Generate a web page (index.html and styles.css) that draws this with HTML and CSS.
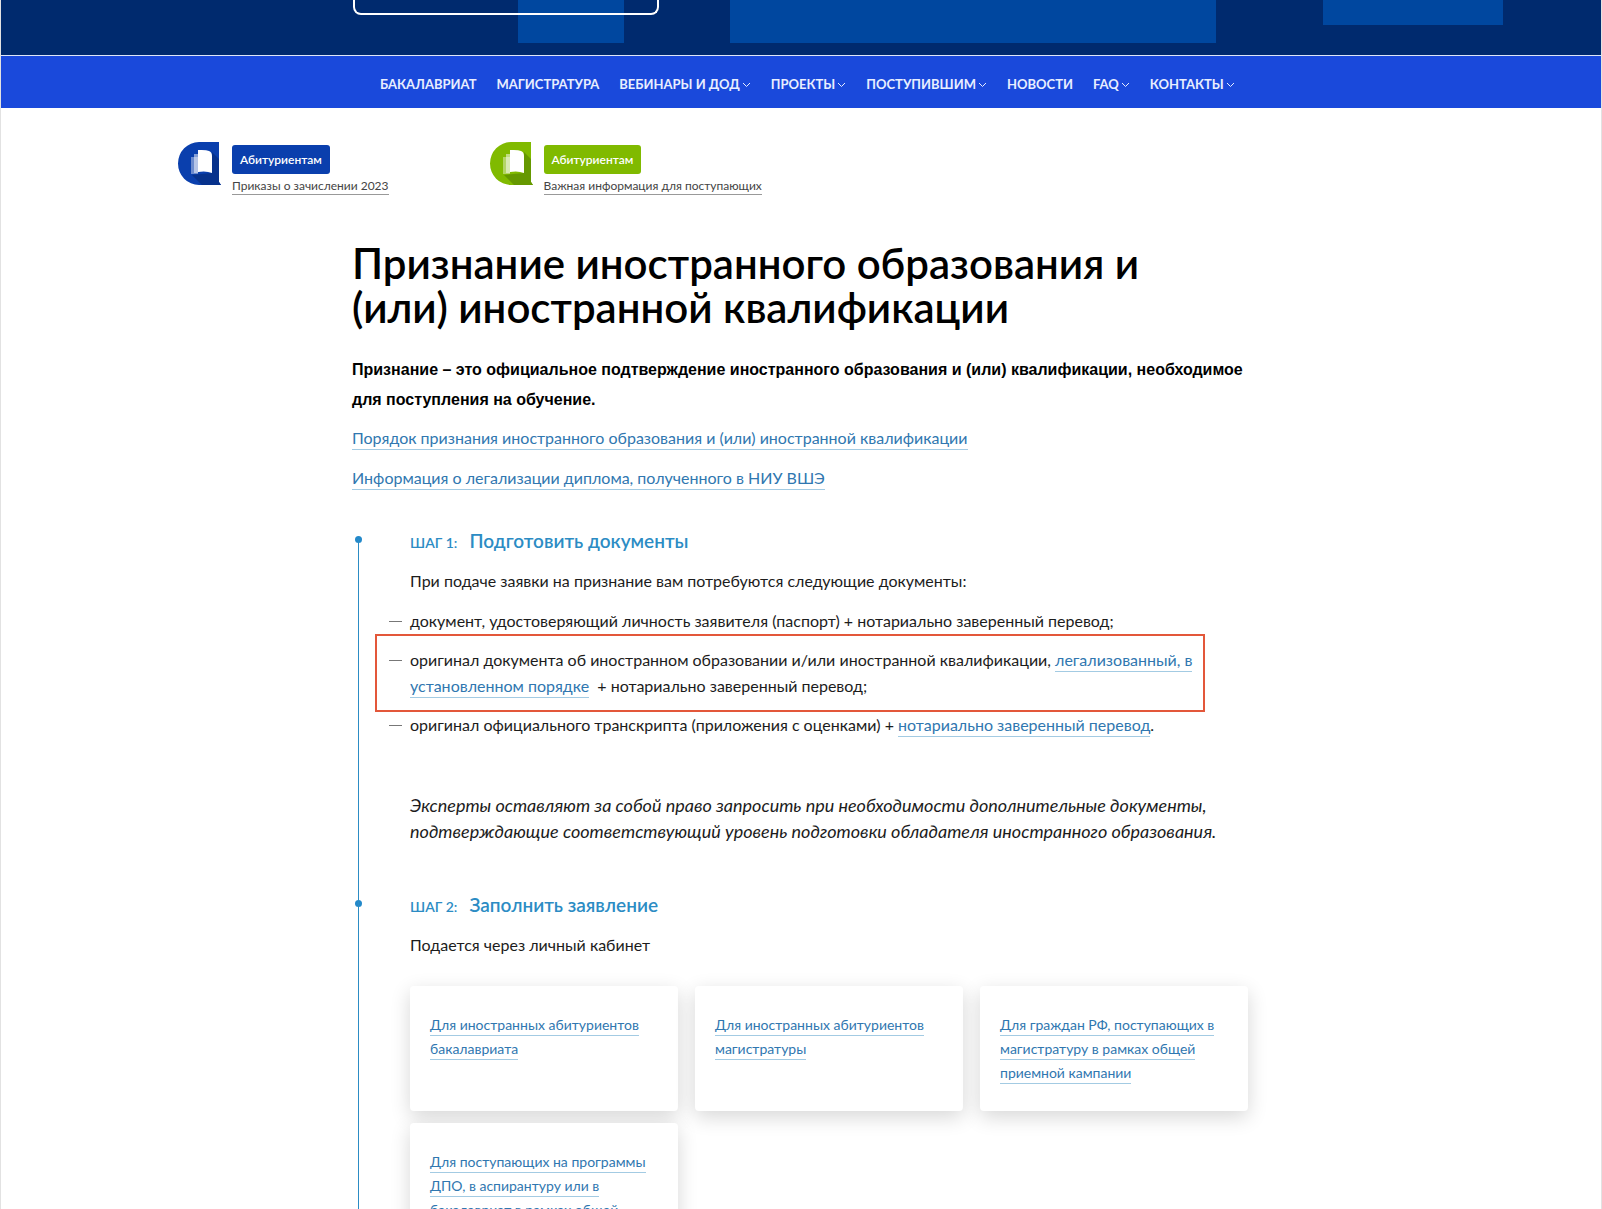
FILE: index.html
```html
<!DOCTYPE html>
<html lang="ru">
<head>
<meta charset="utf-8">
<meta name="viewport" content="width=device-width, initial-scale=1">
<title>Признание иностранного образования</title>
<link rel="stylesheet" href="styles.css">
</head>
<body>
<div class="page">
  <header class="hero">
    <div class="hero-block hero-block-a"></div>
    <div class="hero-block hero-block-b"></div>
    <div class="hero-block hero-block-c"></div>
    <div class="hero-frame"></div>
  </header>

  <nav class="nav" aria-label="Основное меню">
    <ul class="nav-list">
      <li><a href="#">БАКАЛАВРИАТ</a></li>
      <li><a href="#">МАГИСТРАТУРА</a></li>
      <li><a href="#">ВЕБИНАРЫ И ДОД<svg class="chevron" viewBox="0 0 9 6"><path d="M1 1l3.500 3.500L8 1"/></svg></a></li>
      <li><a href="#">ПРОЕКТЫ<svg class="chevron" viewBox="0 0 9 6"><path d="M1 1l3.500 3.500L8 1"/></svg></a></li>
      <li><a href="#">ПОСТУПИВШИМ<svg class="chevron" viewBox="0 0 9 6"><path d="M1 1l3.500 3.500L8 1"/></svg></a></li>
      <li><a href="#">НОВОСТИ</a></li>
      <li><a href="#">FAQ<svg class="chevron" viewBox="0 0 9 6"><path d="M1 1l3.500 3.500L8 1"/></svg></a></li>
      <li><a href="#">КОНТАКТЫ<svg class="chevron" viewBox="0 0 9 6"><path d="M1 1l3.500 3.500L8 1"/></svg></a></li>
    </ul>
  </nav>

  <section class="notices">
    <article class="notice notice-blue">
      <svg class="notice-icon" viewBox="0 0 43 43">
        <path class="icon-base" d="M21 0H41V40L43 43H21A21 21.500 0 0 1 21 0Z"/>
        <path class="icon-shade" d="M14 33L24 43H43L41 40V17L34 10V31Z"/>
        <path class="icon-page-back" d="M13 15h7v17h-7z"/>
        <path class="icon-page-mid" d="M16 12h4v19h-4z"/>
        <path class="icon-page" d="M20 8Q28 7.500 31 9Q34 10 34 14V31Q28 28.500 20 30Z"/>
      </svg>
      <div class="notice-body">
        <a class="badge" href="#">Абитуриентам</a>
        <a class="notice-link" href="#">Приказы о зачислении 2023</a>
      </div>
    </article>
    <article class="notice notice-green">
      <svg class="notice-icon" viewBox="0 0 43 43">
        <path class="icon-base" d="M21 0H41V40L43 43H21A21 21.500 0 0 1 21 0Z"/>
        <path class="icon-shade" d="M14 33L24 43H43L41 40V17L34 10V31Z"/>
        <path class="icon-page-back" d="M13 15h7v17h-7z"/>
        <path class="icon-page-mid" d="M16 12h4v19h-4z"/>
        <path class="icon-page" d="M20 8Q28 7.500 31 9Q34 10 34 14V31Q28 28.500 20 30Z"/>
      </svg>
      <div class="notice-body">
        <a class="badge" href="#">Абитуриентам</a>
        <a class="notice-link" href="#">Важная информация для поступающих</a>
      </div>
    </article>
  </section>

  <main class="content">
    <h1 class="title">Признание иностранного образования и (или) иностранной квалификации</h1>
    <p class="lead">Признание – это официальное подтверждение иностранного образования и (или) квалификации, необходимое для поступления на обучение.</p>
    <p class="text"><a class="link" href="#">Порядок признания иностранного образования и (или) иностранной квалификации</a></p>
    <p class="text"><a class="link" href="#">Информация о легализации диплома, полученного в НИУ ВШЭ</a></p>

    <div class="steps">
      <section class="step">
        <h2 class="step-title"><span class="step-number">ШАГ 1:</span>Подготовить документы</h2>
        <p class="text">При подаче заявки на признание вам потребуются следующие документы:</p>
        <ul class="docs">
          <li>документ, удостоверяющий личность заявителя (паспорт) + нотариально заверенный перевод;</li>
          <li class="marked">оригинал документа об иностранном образовании и/или иностранной квалификации, <a class="link" href="#">легализованный, в установленном порядке</a>&nbsp; + нотариально заверенный перевод;</li>
          <li>оригинал официального транскрипта (приложения с оценками) + <a class="link" href="#">нотариально заверенный перевод</a>.</li>
        </ul>
        <p class="remark">Эксперты оставляют за собой право запросить при необходимости дополнительные документы, подтверждающие соответствующий уровень подготовки обладателя иностранного образования.</p>
      </section>

      <section class="step">
        <h2 class="step-title"><span class="step-number">ШАГ 2:</span>Заполнить заявление</h2>
        <p class="text">Подается через личный кабинет</p>
        <div class="cards">
          <div class="card"><a class="link" href="#">Для иностранных абитуриентов бакалавриата</a></div>
          <div class="card"><a class="link" href="#">Для иностранных абитуриентов магистратуры</a></div>
          <div class="card"><a class="link" href="#">Для граждан РФ, поступающих в магистратуру в рамках общей приемной кампании</a></div>
          <div class="card"><a class="link" href="#">Для поступающих на программы ДПО, в аспирантуру или в бакалавриат в рамках общей</a></div>
        </div>
      </section>
    </div>
  </main>
</div>
</body>
</html>
```
FILE: styles.css
```css
* { box-sizing: border-box; }

body {
  margin: 0;
  background: #fff;
  color: #1c1c1c;
  font: 16px/26px Lato, "Open Sans", sans-serif;
}

a { color: inherit; text-decoration: none; }
ul { margin: 0; padding: 0; list-style: none; }

.page {
  height: 100vh;
  overflow: hidden;
  border: solid #e2e2e2;
  border-width: 0 1px;
}

/* Hero */
.hero {
  position: relative;
  height: 56px;
  background: #002a6e;
  border-bottom: 1px solid #dfe7f7;
}
.hero-block { position: absolute; top: 0; background: #00479f; }
.hero-block-a { left: 517px; width: 106px; height: 43px; }
.hero-block-b { left: 729px; width: 486px; height: 43px; }
.hero-block-c { left: 1322px; width: 180px; height: 25px; }
.hero-frame {
  position: absolute;
  top: 0;
  left: 352px;
  width: 306px;
  height: 15px;
  border: 2px solid #fff;
  border-top: 0;
  border-radius: 0 0 8px 8px;
}

/* Navigation */
.nav { background: #1a49db; color: #e8eeff; }
.nav-list {
  display: flex;
  gap: 20px;
  max-width: 896px;
  height: 52px;
  margin: 0 auto;
  padding: 4px 0 0 27px;
  align-items: center;
  font-size: 13px;
  font-weight: 700;
  white-space: nowrap;
}
.chevron {
  width: 9px;
  height: 6px;
  margin-left: 2px;
  vertical-align: 1px;
  fill: none;
  stroke: currentColor;
  stroke-width: 1;
}

/* Notices */
.notices {
  display: grid;
  grid-template-columns: repeat(4, 1fr);
  max-width: 1246px;
  margin: 0 auto;
  padding: 34px 0 46px;
}
.notice { display: flex; gap: 11px; }
.notice-icon { flex: none; width: 43px; height: 43px; }
.notice-body {
  display: flex;
  flex-direction: column;
  align-items: flex-start;
  padding-top: 3px;
  white-space: nowrap;
}
.badge {
  padding: 0 8px;
  border-radius: 3px;
  color: #fff;
  font-size: 12px;
  font-weight: 600;
  line-height: 29px;
}
.notice-link {
  margin-top: 3px;
  border-bottom: 1px solid #999;
  color: #444;
  font-size: 12px;
  line-height: 17px;
}
.notice-blue .badge { background: #0a3fad; }
.notice-green .badge { background: #80ba00; }
.notice-blue .icon-base { fill: #0a3fad; }
.notice-blue .icon-shade { fill: #07328c; }
.notice-green .icon-base { fill: #80ba00; }
.notice-green .icon-shade { fill: #659800; }
.icon-page { fill: #fff; }
.icon-page-mid { fill: #fff; opacity: 0.5; }
.icon-page-back { fill: #fff; opacity: 0.4; }

/* Content */
.content { max-width: 898px; margin: 0 auto; padding-right: 2px; }
.title {
  max-width: 840px;
  margin: 0;
  color: #000;
  font-size: 42px;
  font-weight: 600;
  line-height: 44px;
}
.lead {
  margin: 26px 0 10px;
  color: #000;
  font: bold 16px/30px "Liberation Sans", Arial, sans-serif;
}
.text { margin: 0 0 14px; }
.link {
  padding-bottom: 2px;
  border-bottom: 1px solid #a3cbe3;
  color: #3077b0;
}

/* Steps */
.steps { margin-top: 37px; padding-left: 6px; }
.step {
  position: relative;
  padding: 0 0 39px 52px;
}
.step::before {
  content: "";
  position: absolute;
  top: 8px;
  left: -3px;
  width: 7px;
  height: 7px;
  border-radius: 50%;
  background: #2389ca;
}
.step::after {
  content: "";
  position: absolute;
  top: 0;
  bottom: 0;
  left: 0;
  width: 1px;
  background: #2c8cc4;
}
.step:first-child::after { top: 11px; }
.step-title {
  margin: 0 0 12px;
  color: #2c8cc4;
  font-size: 19px;
  font-weight: 600;
  line-height: 26px;
}
.step-number { margin-right: 12px; font-size: 14px; }
.docs li { position: relative; margin-bottom: 13px; }
.docs li::before {
  content: "";
  position: absolute;
  top: 13px;
  left: -21px;
  width: 13px;
  height: 1px;
  background: #777;
}
.marked::after {
  content: "";
  position: absolute;
  inset: -13px 43px -13px -35px;
  border: 2px solid #e3573a;
  pointer-events: none;
}
.remark {
  margin: 54px 0 9px;
  font-size: 18px;
  font-style: italic;
}

/* Cards */
.cards {
  display: grid;
  grid-template-columns: repeat(3, 1fr);
  gap: 12px 17px;
  margin-top: 28px;
}
.card {
  min-height: 125px;
  padding: 27px 20px 24px;
  border-radius: 4px;
  background: #fff;
  box-shadow: 0 6px 20px rgba(0, 0, 0, 0.16);
  font-size: 14px;
  line-height: 24px;
}
```
